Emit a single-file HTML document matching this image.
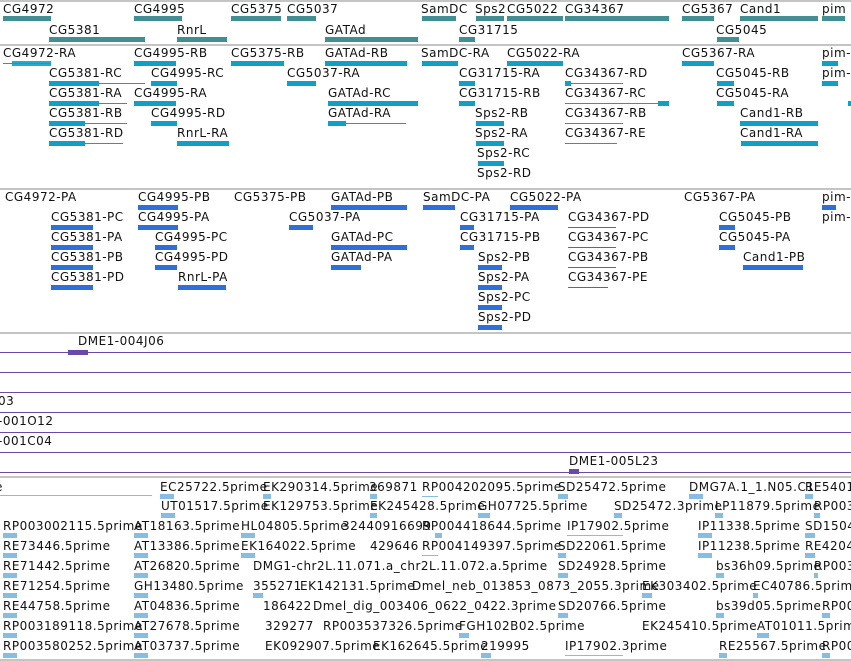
<!DOCTYPE html>
<html><head><meta charset="utf-8"><style>
body{margin:0;width:851px;height:661px;overflow:hidden;background:#fff;position:relative;font-family:"DejaVu Sans","Liberation Sans",sans-serif;font-size:12px}
.t{position:absolute;white-space:nowrap;line-height:14px;color:#111;letter-spacing:0.5px}
.b{position:absolute;height:5px}
.l{position:absolute;height:1px}
.g{position:absolute;left:0;width:851px;height:2px;background:#c4c4c4}
.p{position:absolute;left:0;width:851px;height:1px;background:#6a4aa8}
.a{background:#3f8f93}.c{background:#119fc5}.d{background:#2f6fd8}.e{background:#86bde0}
</style></head><body>
<div class="g" style="top:0"></div>
<div class="g" style="top:44px"></div>
<div class="g" style="top:188px"></div>
<div class="g" style="top:332px"></div>
<div class="g" style="top:476px"></div>
<div class="g" style="top:659px"></div>

<!-- track1 -->
<div class="t" style="left:3px;top:2px">CG4972</div><div class="b a" style="left:3px;top:16px;width:48px"></div>
<div class="t" style="left:134px;top:2px">CG4995</div><div class="b a" style="left:134px;top:16px;width:48px"></div>
<div class="t" style="left:231px;top:2px">CG5375</div><div class="b a" style="left:231px;top:16px;width:50px"></div>
<div class="t" style="left:287px;top:2px">CG5037</div><div class="b a" style="left:287px;top:16px;width:29px"></div>
<div class="t" style="left:421px;top:2px">SamDC</div><div class="b a" style="left:422px;top:16px;width:34px"></div>
<div class="t" style="left:475px;top:2px">Sps2</div><div class="b a" style="left:476px;top:16px;width:28px"></div>
<div class="t" style="left:507px;top:2px">CG5022</div><div class="b a" style="left:507px;top:16px;width:56px"></div>
<div class="t" style="left:565px;top:2px">CG34367</div><div class="b a" style="left:565px;top:16px;width:104px"></div>
<div class="t" style="left:682px;top:2px">CG5367</div><div class="b a" style="left:682px;top:16px;width:32px"></div>
<div class="t" style="left:740px;top:2px">Cand1</div><div class="b a" style="left:740px;top:16px;width:78px"></div>
<div class="t" style="left:822px;top:2px">pim</div><div class="b a" style="left:822px;top:16px;width:23px"></div>
<div class="t" style="left:49px;top:23px">CG5381</div><div class="b a" style="left:49px;top:37px;width:96px"></div>
<div class="t" style="left:177px;top:23px">RnrL</div><div class="b a" style="left:177px;top:37px;width:50px"></div>
<div class="t" style="left:325px;top:23px">GATAd</div><div class="b a" style="left:325px;top:37px;width:93px"></div>
<div class="t" style="left:459px;top:23px">CG31715</div><div class="b a" style="left:459px;top:37px;width:16px"></div>
<div class="t" style="left:716px;top:23px">CG5045</div><div class="b a" style="left:717px;top:37px;width:22px"></div>

<!-- track2 -->
<div class="t" style="left:3px;top:46px">CG4972-RA</div><div class="l c" style="left:3px;top:63px;width:48px"></div><div class="b c" style="left:12px;top:61px;width:39px;opacity:.9"></div>
<div class="t" style="left:134px;top:46px">CG4995-RB</div><div class="b c" style="left:134px;top:61px;width:42px"></div>
<div class="t" style="left:231px;top:46px">CG5375-RB</div><div class="b c" style="left:231px;top:61px;width:53px"></div>
<div class="t" style="left:325px;top:46px">GATAd-RB</div><div class="b c" style="left:325px;top:61px;width:82px"></div>
<div class="t" style="left:421px;top:46px">SamDC-RA</div><div class="b c" style="left:422px;top:61px;width:36px"></div>
<div class="t" style="left:507px;top:46px">CG5022-RA</div><div class="b c" style="left:507px;top:61px;width:56px"></div>
<div class="t" style="left:682px;top:46px">CG5367-RA</div><div class="b c" style="left:682px;top:61px;width:32px"></div>
<div class="t" style="left:822px;top:46px">pim-</div><div class="b c" style="left:822px;top:61px;width:16px"></div>
<div class="t" style="left:49px;top:66px">CG5381-RC</div><div class="b c" style="left:49px;top:81px;width:50px"></div><div class="l c" style="left:99px;top:83px;width:46px"></div>
<div class="t" style="left:151px;top:66px">CG4995-RC</div><div class="b c" style="left:151px;top:81px;width:26px"></div>
<div class="t" style="left:287px;top:66px">CG5037-RA</div><div class="b c" style="left:287px;top:81px;width:29px"></div>
<div class="t" style="left:459px;top:66px">CG31715-RA</div><div class="b c" style="left:459px;top:81px;width:16px"></div>
<div class="t" style="left:565px;top:66px">CG34367-RD</div><div class="l c" style="left:565px;top:83px;width:58px"></div><div class="b c" style="left:565px;top:81px;width:6px"></div>
<div class="t" style="left:716px;top:66px">CG5045-RB</div><div class="b c" style="left:717px;top:81px;width:17px"></div>
<div class="t" style="left:822px;top:66px">pim-</div><div class="b c" style="left:822px;top:81px;width:16px"></div>
<div class="t" style="left:49px;top:86px">CG5381-RA</div><div class="b c" style="left:49px;top:101px;width:50px"></div><div class="l c" style="left:99px;top:103px;width:28px"></div>
<div class="t" style="left:134px;top:86px">CG4995-RA</div><div class="b c" style="left:134px;top:101px;width:42px"></div>
<div class="t" style="left:328px;top:86px">GATAd-RC</div><div class="b c" style="left:328px;top:101px;width:90px"></div>
<div class="t" style="left:459px;top:86px">CG31715-RB</div><div class="b c" style="left:459px;top:101px;width:16px"></div>
<div class="t" style="left:565px;top:86px">CG34367-RC</div><div class="l c" style="left:565px;top:103px;width:104px"></div><div class="b c" style="left:658px;top:101px;width:11px"></div>
<div class="t" style="left:716px;top:86px">CG5045-RA</div><div class="b c" style="left:717px;top:101px;width:17px"></div>
<div class="b c" style="left:848px;top:101px;width:3px"></div>
<div class="t" style="left:49px;top:106px">CG5381-RB</div><div class="b c" style="left:49px;top:121px;width:36px"></div><div class="l c" style="left:85px;top:123px;width:42px"></div>
<div class="t" style="left:151px;top:106px">CG4995-RD</div><div class="b c" style="left:151px;top:121px;width:26px"></div>
<div class="t" style="left:328px;top:106px">GATAd-RA</div><div class="b c" style="left:328px;top:121px;width:18px"></div><div class="l c" style="left:346px;top:123px;width:60px"></div>
<div class="t" style="left:475px;top:106px">Sps2-RB</div><div class="b c" style="left:476px;top:121px;width:28px"></div>
<div class="t" style="left:565px;top:106px">CG34367-RB</div><div class="l c" style="left:565px;top:123px;width:58px"></div>
<div class="t" style="left:740px;top:106px">Cand1-RB</div><div class="b c" style="left:740px;top:121px;width:78px"></div>
<div class="t" style="left:49px;top:126px">CG5381-RD</div><div class="b c" style="left:49px;top:141px;width:36px"></div><div class="l c" style="left:85px;top:143px;width:38px"></div>
<div class="t" style="left:177px;top:126px">RnrL-RA</div><div class="b c" style="left:177px;top:141px;width:52px"></div>
<div class="t" style="left:475px;top:126px">Sps2-RA</div><div class="b c" style="left:476px;top:141px;width:28px"></div>
<div class="t" style="left:565px;top:126px">CG34367-RE</div><div class="l c" style="left:565px;top:143px;width:52px"></div>
<div class="t" style="left:740px;top:126px">Cand1-RA</div><div class="b c" style="left:741px;top:141px;width:77px"></div>
<div class="t" style="left:477px;top:146px">Sps2-RC</div><div class="b c" style="left:478px;top:161px;width:26px"></div>
<div class="t" style="left:477px;top:166px">Sps2-RD</div>

<!-- track3 -->
<div class="t" style="left:5px;top:190px">CG4972-PA</div>
<div class="t" style="left:138px;top:190px">CG4995-PB</div><div class="b d" style="left:138px;top:205px;width:40px"></div>
<div class="t" style="left:234px;top:190px">CG5375-PB</div>
<div class="t" style="left:331px;top:190px">GATAd-PB</div><div class="b d" style="left:331px;top:205px;width:76px"></div>
<div class="t" style="left:423px;top:190px">SamDC-PA</div><div class="b d" style="left:423px;top:205px;width:32px"></div>
<div class="t" style="left:510px;top:190px">CG5022-PA</div><div class="b d" style="left:510px;top:205px;width:48px"></div>
<div class="t" style="left:684px;top:190px">CG5367-PA</div>
<div class="t" style="left:822px;top:190px">pim-</div><div class="b d" style="left:822px;top:205px;width:14px"></div>
<div class="t" style="left:51px;top:210px">CG5381-PC</div><div class="b d" style="left:51px;top:225px;width:42px"></div>
<div class="t" style="left:138px;top:210px">CG4995-PA</div><div class="b d" style="left:138px;top:225px;width:40px"></div>
<div class="t" style="left:289px;top:210px">CG5037-PA</div><div class="b d" style="left:289px;top:225px;width:24px"></div>
<div class="t" style="left:460px;top:210px">CG31715-PA</div><div class="b d" style="left:460px;top:225px;width:14px"></div>
<div class="t" style="left:568px;top:210px">CG34367-PD</div><div class="l d" style="left:568px;top:227px;width:48px"></div>
<div class="t" style="left:719px;top:210px">CG5045-PB</div><div class="b d" style="left:719px;top:225px;width:16px"></div>
<div class="t" style="left:822px;top:210px">pim-</div>
<div class="t" style="left:51px;top:230px">CG5381-PA</div><div class="b d" style="left:51px;top:245px;width:42px"></div>
<div class="t" style="left:155px;top:230px">CG4995-PC</div><div class="b d" style="left:155px;top:245px;width:22px"></div>
<div class="t" style="left:331px;top:230px">GATAd-PC</div><div class="b d" style="left:331px;top:245px;width:76px"></div>
<div class="t" style="left:460px;top:230px">CG31715-PB</div><div class="b d" style="left:460px;top:245px;width:14px"></div>
<div class="t" style="left:568px;top:230px">CG34367-PC</div><div class="l d" style="left:568px;top:247px;width:48px"></div>
<div class="t" style="left:719px;top:230px">CG5045-PA</div><div class="b d" style="left:719px;top:245px;width:16px"></div>
<div class="t" style="left:51px;top:250px">CG5381-PB</div><div class="b d" style="left:51px;top:265px;width:42px"></div>
<div class="t" style="left:155px;top:250px">CG4995-PD</div><div class="b d" style="left:155px;top:265px;width:22px"></div>
<div class="t" style="left:331px;top:250px">GATAd-PA</div><div class="b d" style="left:331px;top:265px;width:30px"></div>
<div class="t" style="left:478px;top:250px">Sps2-PB</div><div class="b d" style="left:478px;top:265px;width:24px"></div>
<div class="t" style="left:568px;top:250px">CG34367-PB</div><div class="l d" style="left:568px;top:267px;width:48px"></div>
<div class="t" style="left:743px;top:250px">Cand1-PB</div><div class="b d" style="left:743px;top:265px;width:60px"></div>
<div class="t" style="left:51px;top:270px">CG5381-PD</div><div class="b d" style="left:51px;top:285px;width:42px"></div>
<div class="t" style="left:178px;top:270px">RnrL-PA</div><div class="b d" style="left:178px;top:285px;width:48px"></div>
<div class="t" style="left:478px;top:270px">Sps2-PA</div><div class="b d" style="left:478px;top:285px;width:24px"></div>
<div class="t" style="left:568px;top:270px">CG34367-PE</div><div class="l d" style="left:568px;top:287px;width:40px"></div>
<div class="t" style="left:478px;top:290px">Sps2-PC</div><div class="b d" style="left:478px;top:305px;width:24px"></div>
<div class="t" style="left:478px;top:310px">Sps2-PD</div><div class="b d" style="left:478px;top:325px;width:24px"></div>

<!-- purple track -->
<div class="t" style="left:78px;top:334px">DME1-004J06</div><div class="b" style="left:68px;top:350px;width:20px;background:#6a4aa8"></div>
<div class="p" style="top:352px"></div><div class="p" style="top:372px"></div><div class="p" style="top:392px"></div>
<div class="p" style="top:412px"></div><div class="p" style="top:432px"></div><div class="p" style="top:452px"></div><div class="p" style="top:472px"></div>
<div class="t" style="left:-2px;top:394px">03</div>
<div class="t" style="left:-2px;top:414px">-001O12</div>
<div class="t" style="left:-2px;top:434px">-001C04</div>
<div class="t" style="left:569px;top:454px">DME1-005L23</div><div class="b" style="left:569px;top:469px;width:10px;background:#6a4aa8"></div>

<!-- EST track -->
<div class="l e" style="left:0;top:495px;width:152px"></div>
<div class="t" style="left:-5px;top:480px">e</div>
<div class="t" style="left:160px;top:480px">EC25722.5prime</div>
<div class="t" style="left:263px;top:480px">EK290314.5prime</div>
<div class="t" style="left:369px;top:480px">369871</div>
<div class="t" style="left:422px;top:480px">RP004202095.5prime</div>
<div class="t" style="left:558px;top:480px">SD25472.5prime</div>
<div class="t" style="left:689px;top:480px">DMG7A.1_1.N05.C1</div>
<div class="t" style="left:805px;top:480px">RE5401</div>
<div class="t" style="left:161px;top:499px">UT01517.5prime</div>
<div class="t" style="left:263px;top:499px">EK129753.5prime</div>
<div class="t" style="left:370px;top:499px">EK245428.5prime</div>
<div class="t" style="left:478px;top:499px">GH07725.5prime</div>
<div class="t" style="left:614px;top:499px">SD25472.3prime</div>
<div class="t" style="left:715px;top:499px">LP11879.5prime</div>
<div class="t" style="left:814px;top:499px">RP003</div>
<div class="t" style="left:3px;top:519px">RP003002115.5prime</div>
<div class="t" style="left:134px;top:519px">AT18163.5prime</div>
<div class="t" style="left:241px;top:519px">HL04805.5prime</div>
<div class="t" style="left:342px;top:519px">32440916699</div>
<div class="t" style="left:422px;top:519px">RP004418644.5prime</div>
<div class="t" style="left:567px;top:519px">IP17902.5prime</div>
<div class="t" style="left:698px;top:519px">IP11338.5prime</div>
<div class="t" style="left:805px;top:519px">SD1504</div>
<div class="t" style="left:3px;top:539px">RE73446.5prime</div>
<div class="t" style="left:134px;top:539px">AT13386.5prime</div>
<div class="t" style="left:241px;top:539px">EK164022.5prime</div>
<div class="t" style="left:370px;top:539px">429646</div>
<div class="t" style="left:422px;top:539px">RP004149397.5prime</div>
<div class="t" style="left:558px;top:539px">SD22061.5prime</div>
<div class="t" style="left:698px;top:539px">IP11238.5prime</div>
<div class="t" style="left:805px;top:539px">RE4204</div>
<div class="t" style="left:3px;top:559px">RE71442.5prime</div>
<div class="t" style="left:134px;top:559px">AT26820.5prime</div>
<div class="t" style="left:253px;top:559px">DMG1-chr2L.11.071.a_chr2L.11.072.a.5prime</div>
<div class="t" style="left:558px;top:559px">SD24928.5prime</div>
<div class="t" style="left:716px;top:559px">bs36h09.5prime</div>
<div class="t" style="left:814px;top:559px">RP003</div>
<div class="t" style="left:3px;top:579px">RE71254.5prime</div>
<div class="t" style="left:134px;top:579px">GH13480.5prime</div>
<div class="t" style="left:253px;top:579px">355271</div>
<div class="t" style="left:300px;top:579px">EK142131.5prime</div>
<div class="t" style="left:412px;top:579px">Dmel_neb_013853_0873_2055.3prime</div>
<div class="t" style="left:642px;top:579px">EK303402.5prime</div>
<div class="t" style="left:753px;top:579px">EC40786.5prime</div>
<div class="t" style="left:3px;top:599px">RE44758.5prime</div>
<div class="t" style="left:134px;top:599px">AT04836.5prime</div>
<div class="t" style="left:263px;top:599px">186422</div>
<div class="t" style="left:313px;top:599px">Dmel_dig_003406_0622_0422.3prime</div>
<div class="t" style="left:558px;top:599px">SD20766.5prime</div>
<div class="t" style="left:716px;top:599px">bs39d05.5prime</div>
<div class="t" style="left:822px;top:599px">RP00</div>
<div class="t" style="left:3px;top:619px">RP003189118.5prime</div>
<div class="t" style="left:134px;top:619px">AT27678.5prime</div>
<div class="t" style="left:265px;top:619px">329277</div>
<div class="t" style="left:323px;top:619px">RP003537326.5prime</div>
<div class="t" style="left:459px;top:619px">FGH102B02.5prime</div>
<div class="t" style="left:642px;top:619px">EK245410.5prime</div>
<div class="t" style="left:757px;top:619px">AT01011.5prime</div>
<div class="t" style="left:3px;top:639px">RP003580252.5prime</div>
<div class="t" style="left:134px;top:639px">AT03737.5prime</div>
<div class="t" style="left:265px;top:639px">EK092907.5prime</div>
<div class="t" style="left:373px;top:639px">EK162645.5prime</div>
<div class="t" style="left:481px;top:639px">219995</div>
<div class="t" style="left:565px;top:639px">IP17902.3prime</div>
<div class="t" style="left:719px;top:639px">RE25567.5prime</div>
<div class="t" style="left:822px;top:639px">RP00</div>

<div class="b e" style="left:160px;top:494px;width:14px"></div><div class="b e" style="left:263px;top:494px;width:8px"></div><div class="b e" style="left:370px;top:494px;width:7px"></div><div class="l e" style="left:422px;top:496px;width:16px"></div><div class="b e" style="left:558px;top:494px;width:10px"></div><div class="b e" style="left:689px;top:494px;width:14px"></div><div class="b e" style="left:805px;top:494px;width:8px"></div>
<div class="b e" style="left:161px;top:513px;width:14px"></div><div class="b e" style="left:370px;top:513px;width:7px"></div><div class="b e" style="left:478px;top:513px;width:12px"></div><div class="b e" style="left:614px;top:513px;width:8px"></div><div class="b e" style="left:715px;top:513px;width:8px"></div><div class="b e" style="left:814px;top:513px;width:6px"></div>
<div class="b e" style="left:3px;top:533px;width:14px"></div><div class="b e" style="left:134px;top:533px;width:14px"></div><div class="b e" style="left:241px;top:533px;width:14px"></div><div class="b e" style="left:435px;top:533px;width:7px"></div><div class="l e" style="left:567px;top:535px;width:56px"></div><div class="b e" style="left:698px;top:533px;width:14px"></div><div class="b e" style="left:805px;top:533px;width:10px"></div>
<div class="b e" style="left:3px;top:553px;width:14px"></div><div class="b e" style="left:134px;top:553px;width:14px"></div><div class="b e" style="left:241px;top:553px;width:14px"></div><div class="l e" style="left:422px;top:555px;width:16px"></div><div class="b e" style="left:558px;top:553px;width:8px"></div><div class="b e" style="left:698px;top:553px;width:14px"></div><div class="b e" style="left:805px;top:553px;width:10px"></div>
<div class="b e" style="left:3px;top:573px;width:14px"></div><div class="b e" style="left:134px;top:573px;width:14px"></div><div class="b e" style="left:558px;top:573px;width:10px"></div><div class="b e" style="left:716px;top:573px;width:8px"></div><div class="b e" style="left:814px;top:573px;width:4px"></div>
<div class="b e" style="left:3px;top:593px;width:14px"></div><div class="b e" style="left:134px;top:593px;width:14px"></div><div class="b e" style="left:253px;top:593px;width:10px"></div><div class="b e" style="left:642px;top:593px;width:10px"></div><div class="b e" style="left:753px;top:593px;width:5px"></div>
<div class="b e" style="left:3px;top:613px;width:14px"></div><div class="b e" style="left:134px;top:613px;width:14px"></div><div class="b e" style="left:558px;top:613px;width:10px"></div><div class="b e" style="left:716px;top:613px;width:8px"></div><div class="b e" style="left:822px;top:613px;width:8px"></div>
<div class="b e" style="left:3px;top:633px;width:14px"></div><div class="b e" style="left:134px;top:633px;width:14px"></div><div class="b e" style="left:459px;top:633px;width:10px"></div><div class="b e" style="left:757px;top:633px;width:12px"></div>
<div class="b e" style="left:3px;top:653px;width:14px"></div><div class="b e" style="left:134px;top:653px;width:14px"></div><div class="b e" style="left:481px;top:653px;width:10px"></div><div class="l e" style="left:565px;top:655px;width:58px"></div><div class="b e" style="left:719px;top:653px;width:8px"></div><div class="b e" style="left:822px;top:653px;width:8px"></div>
</body></html>
